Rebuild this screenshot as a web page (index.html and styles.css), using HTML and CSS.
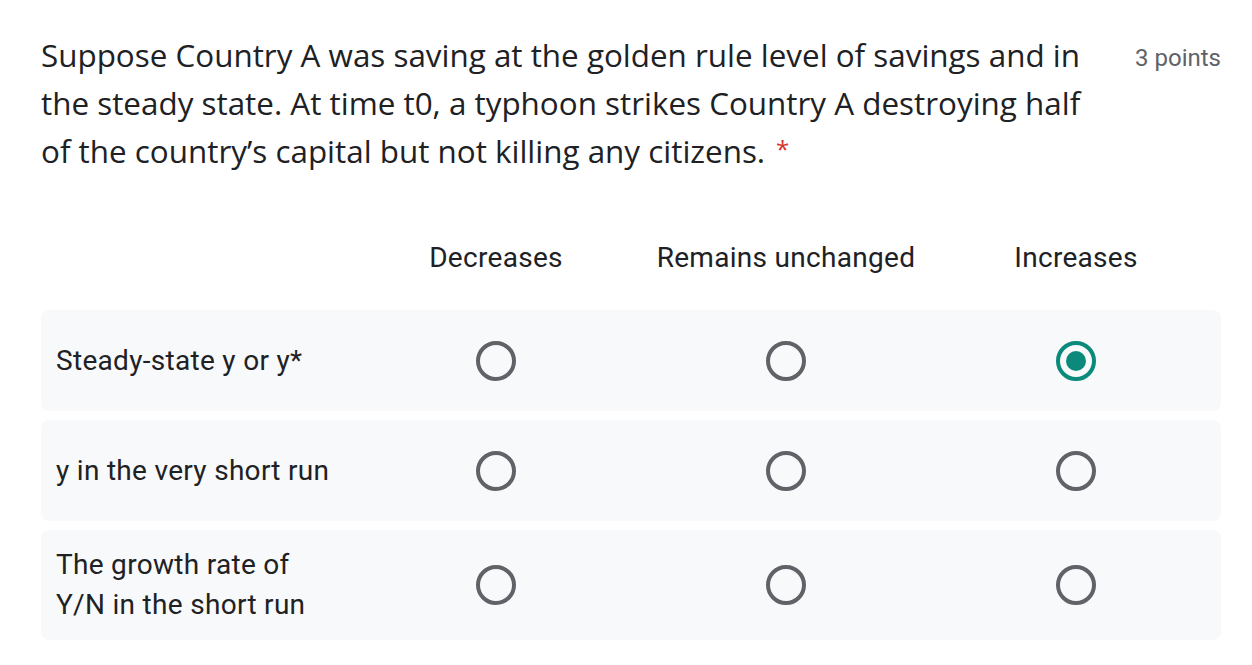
FILE: index.html
```html
<!DOCTYPE html>
<html>
<head>
<meta charset="utf-8">
<link rel="stylesheet" href="styles.css">
</head>
<body>
<div class="question">
  <div class="q-head">
    <div class="q-title">Suppose Country A was saving at the golden rule level of savings and in the steady state. At time t0, a typhoon strikes Country A destroying half of the country’s capital but not killing any citizens.<span class="req">*</span></div>
    <div class="q-points">3 points</div>
  </div>
  <div class="grid">
    <div class="grid-head">
      <div class="cell-label"></div>
      <div class="col-h">Decreases</div>
      <div class="col-h">Remains unchanged</div>
      <div class="col-h">Increases</div>
    </div>
    <div class="grid-row">
      <div class="cell-label">Steady-state y or y*</div>
      <div class="cell"><span class="radio"></span></div>
      <div class="cell"><span class="radio"></span></div>
      <div class="cell"><span class="radio checked"></span></div>
    </div>
    <div class="grid-row">
      <div class="cell-label">y in the very short run</div>
      <div class="cell"><span class="radio"></span></div>
      <div class="cell"><span class="radio"></span></div>
      <div class="cell"><span class="radio"></span></div>
    </div>
    <div class="grid-row">
      <div class="cell-label">The growth rate of<br>Y/N in the short run</div>
      <div class="cell"><span class="radio"></span></div>
      <div class="cell"><span class="radio"></span></div>
      <div class="cell"><span class="radio"></span></div>
    </div>
  </div>
</div>
</body>
</html>
```

FILE: styles.css
```css
html, body {
  margin: 0;
  padding: 0;
  background: #ffffff;
}
.question {
  width: 1180px;
  padding: 31px 0 0 41px;
  font-family: Roboto, "Liberation Sans", sans-serif;
  color: #202124;
}
.q-head {
  display: flex;
  align-items: flex-start;
  justify-content: space-between;
}
.q-title {
  width: 1062px;
  font-family: "Open Sans", "Liberation Sans", sans-serif;
  font-size: 31.4px;
  line-height: 48px;
  color: #202124;
}
.req {
  display: inline-block;
  color: #d93025;
  margin-left: 11px;
  font-size: 24px;
  line-height: 20px;
  vertical-align: 5px;
}
.q-points {
  font-size: 24px;
  line-height: 54px;
  color: #5f6368;
}
.grid {
  margin-top: 53px;
  display: flex;
  flex-direction: column;
  gap: 9px;
}
.grid-head,
.grid-row {
  display: grid;
  grid-template-columns: 310px 1fr 1fr 1fr;
  align-items: center;
}
.grid-head {
  height: 60px;
  margin-bottom: 13px;
}
.col-h {
  text-align: center;
  font-size: 28px;
  line-height: 40px;
  letter-spacing: 0.3px;
}
.grid-row {
  background: #f8f9fa;
  border-radius: 8px;
  min-height: 101px;
  padding: 15px 0;
  box-sizing: border-box;
}
.grid-row .cell-label {
  padding-left: 15px;
  font-size: 28px;
  line-height: 40px;
  letter-spacing: 0.3px;
}
.cell {
  display: flex;
  justify-content: center;
  align-items: center;
}
.radio {
  width: 40px;
  height: 40px;
  box-sizing: border-box;
  border: 4px solid #5f6368;
  border-radius: 50%;
  display: flex;
  align-items: center;
  justify-content: center;
}
.radio.checked {
  border-color: #0b8a7b;
}
.radio.checked::after {
  content: "";
  width: 20px;
  height: 20px;
  border-radius: 50%;
  background: #0b8a7b;
}
```
